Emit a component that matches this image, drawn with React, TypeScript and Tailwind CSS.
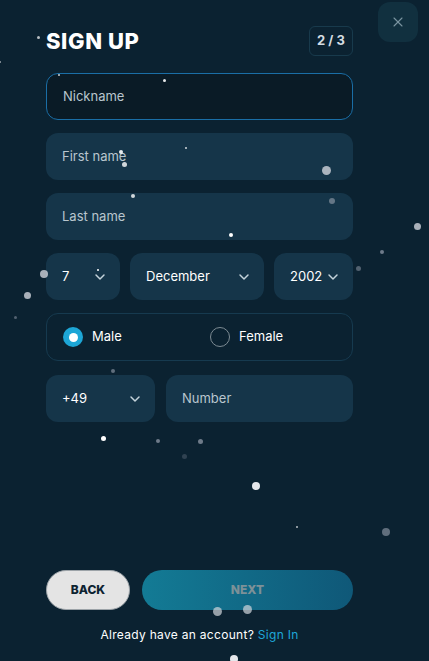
import { X, ChevronDown } from "lucide-react";

const dots: [number, number, number, string][] = [
  [38, 37, 3, "bg-white/70"], [0, 62, 2, "bg-white/60"], [59, 75, 2, "bg-white/80"], [164, 80, 3, "bg-white/90"],
  [121, 152, 4, "bg-white/90"], [124, 164, 5, "bg-white/80"], [186, 148, 2, "bg-white/80"], [326, 170, 9, "bg-gray-300/80"],
  [133, 196, 4, "bg-white/80"], [332, 201, 6, "bg-gray-400/60"], [231, 235, 4, "bg-white"], [417, 226, 7, "bg-gray-300/80"],
  [382, 252, 4, "bg-gray-400/70"], [98, 270, 2, "bg-white"], [44, 274, 8, "bg-gray-300/80"], [358, 268, 5, "bg-gray-400/50"],
  [27, 295, 7, "bg-gray-300/80"], [15, 317, 3, "bg-gray-400/50"], [113, 371, 4, "bg-gray-400/60"], [103, 438, 5, "bg-white"],
  [158, 441, 4, "bg-gray-400/70"], [200, 441, 5, "bg-gray-400/70"], [184, 456, 5, "bg-gray-500/40"], [256, 486, 8, "bg-gray-200"],
  [297, 527, 2, "bg-white/70"], [386, 532, 8, "bg-gray-400/60"], [217, 611, 9, "bg-gray-300/70"], [247, 609, 9, "bg-gray-300/70"],
  [234, 659, 8, "bg-gray-200"],
];

function Field({ label }: { label: string }) {
  return (
    <div className="h-[47px] rounded-xl bg-[#153549] flex items-center px-4 text-[13px] text-[#b9c6ce]">{label}</div>
  );
}

function Select({ value, className }: { value: string; className: string }) {
  return (
    <div className={"h-[47px] rounded-xl bg-[#153549] flex items-center justify-between pl-4 pr-3 text-[13px] text-white " + className}>
      <span>{value}</span>
      <ChevronDown size={16} strokeWidth={2.2} className="text-[#c5d3db]" />
    </div>
  );
}

export default function App() {
  return (
    <div className="relative w-[429px] h-[661px] overflow-hidden bg-[#0b2231]" style={{ fontFamily: "Inter, 'Open Sans', sans-serif" }}>
      <button className="absolute left-[378px] top-[2px] w-[40px] h-[40px] rounded-xl bg-[#11303f] flex items-center justify-center text-[#7b95a1]">
        <X size={16} strokeWidth={1.6} />
      </button>

      <div className="ml-[46px] w-[307px] pt-[26px] flex flex-col">
        <div className="flex items-center justify-between h-[30px]">
          <h1 className="text-[22px] font-extrabold text-white tracking-[0.6px]">SIGN UP</h1>
          <div className="w-[44px] h-[30px] rounded-md border border-[#183a4c] flex items-center justify-center text-[13px] font-bold text-[#d5dde2]">2 / 3</div>
        </div>

        <div className="mt-[17px] h-[47px] rounded-xl bg-[#0a1b26] border border-[#1a6ea6] flex items-center px-4 text-[13px] text-[#b9c6ce]">Nickname</div>
        <div className="mt-[13px] flex flex-col gap-[13px]">
          <Field label="First name" />
          <Field label="Last name" />
        </div>

        <div className="mt-[13px] flex gap-[10px]">
          <Select value="7" className="w-[74px]" />
          <Select value="December" className="w-[134px]" />
          <Select value="2002" className="flex-1" />
        </div>

        <div className="mt-[13px] h-[48px] rounded-xl border border-[#163a4f] flex items-center text-[13px] text-white">
          <div className="w-[163px] flex items-center gap-[9px] pl-[16px]">
            <span className="w-[20px] h-[20px] rounded-full bg-[#1da6d6] flex items-center justify-center">
              <span className="w-[9px] h-[9px] rounded-full bg-white" />
            </span>
            Male
          </div>
          <div className="flex items-center gap-[9px]">
            <span className="w-[20px] h-[20px] rounded-full border border-[#7d8b93]" />
            Female
          </div>
        </div>

        <div className="mt-[14px] flex gap-[11px]">
          <Select value="+49" className="w-[109px]" />
          <div className="flex-1 h-[47px] rounded-xl bg-[#153549] flex items-center px-4 text-[13px] text-[#b9c6ce]">Number</div>
        </div>

        <div className="mt-[148px] flex gap-[12px]">
          <button className="w-[84px] h-[40px] rounded-full bg-[#e4e4e4] border border-[#9ca3a8] text-[12px] font-extrabold text-[#0d2331]">BACK</button>
          <button className="flex-1 h-[40px] rounded-full bg-gradient-to-r from-[#137b95] to-[#0f5878] text-[12px] font-extrabold text-[#7d9198]">NEXT</button>
        </div>

        <p className="mt-[16px] text-center text-[12px] tracking-[0.3px] text-white">
          Already have an account? <span className="text-[#1fa7d8]">Sign In</span>
        </p>
      </div>

      {dots.map(([x, y, s, c], i) => (
        <span key={i} className={"absolute rounded-full pointer-events-none " + c} style={{ left: x - s / 2, top: y - s / 2, width: s, height: s }} />
      ))}
    </div>
  );
}
